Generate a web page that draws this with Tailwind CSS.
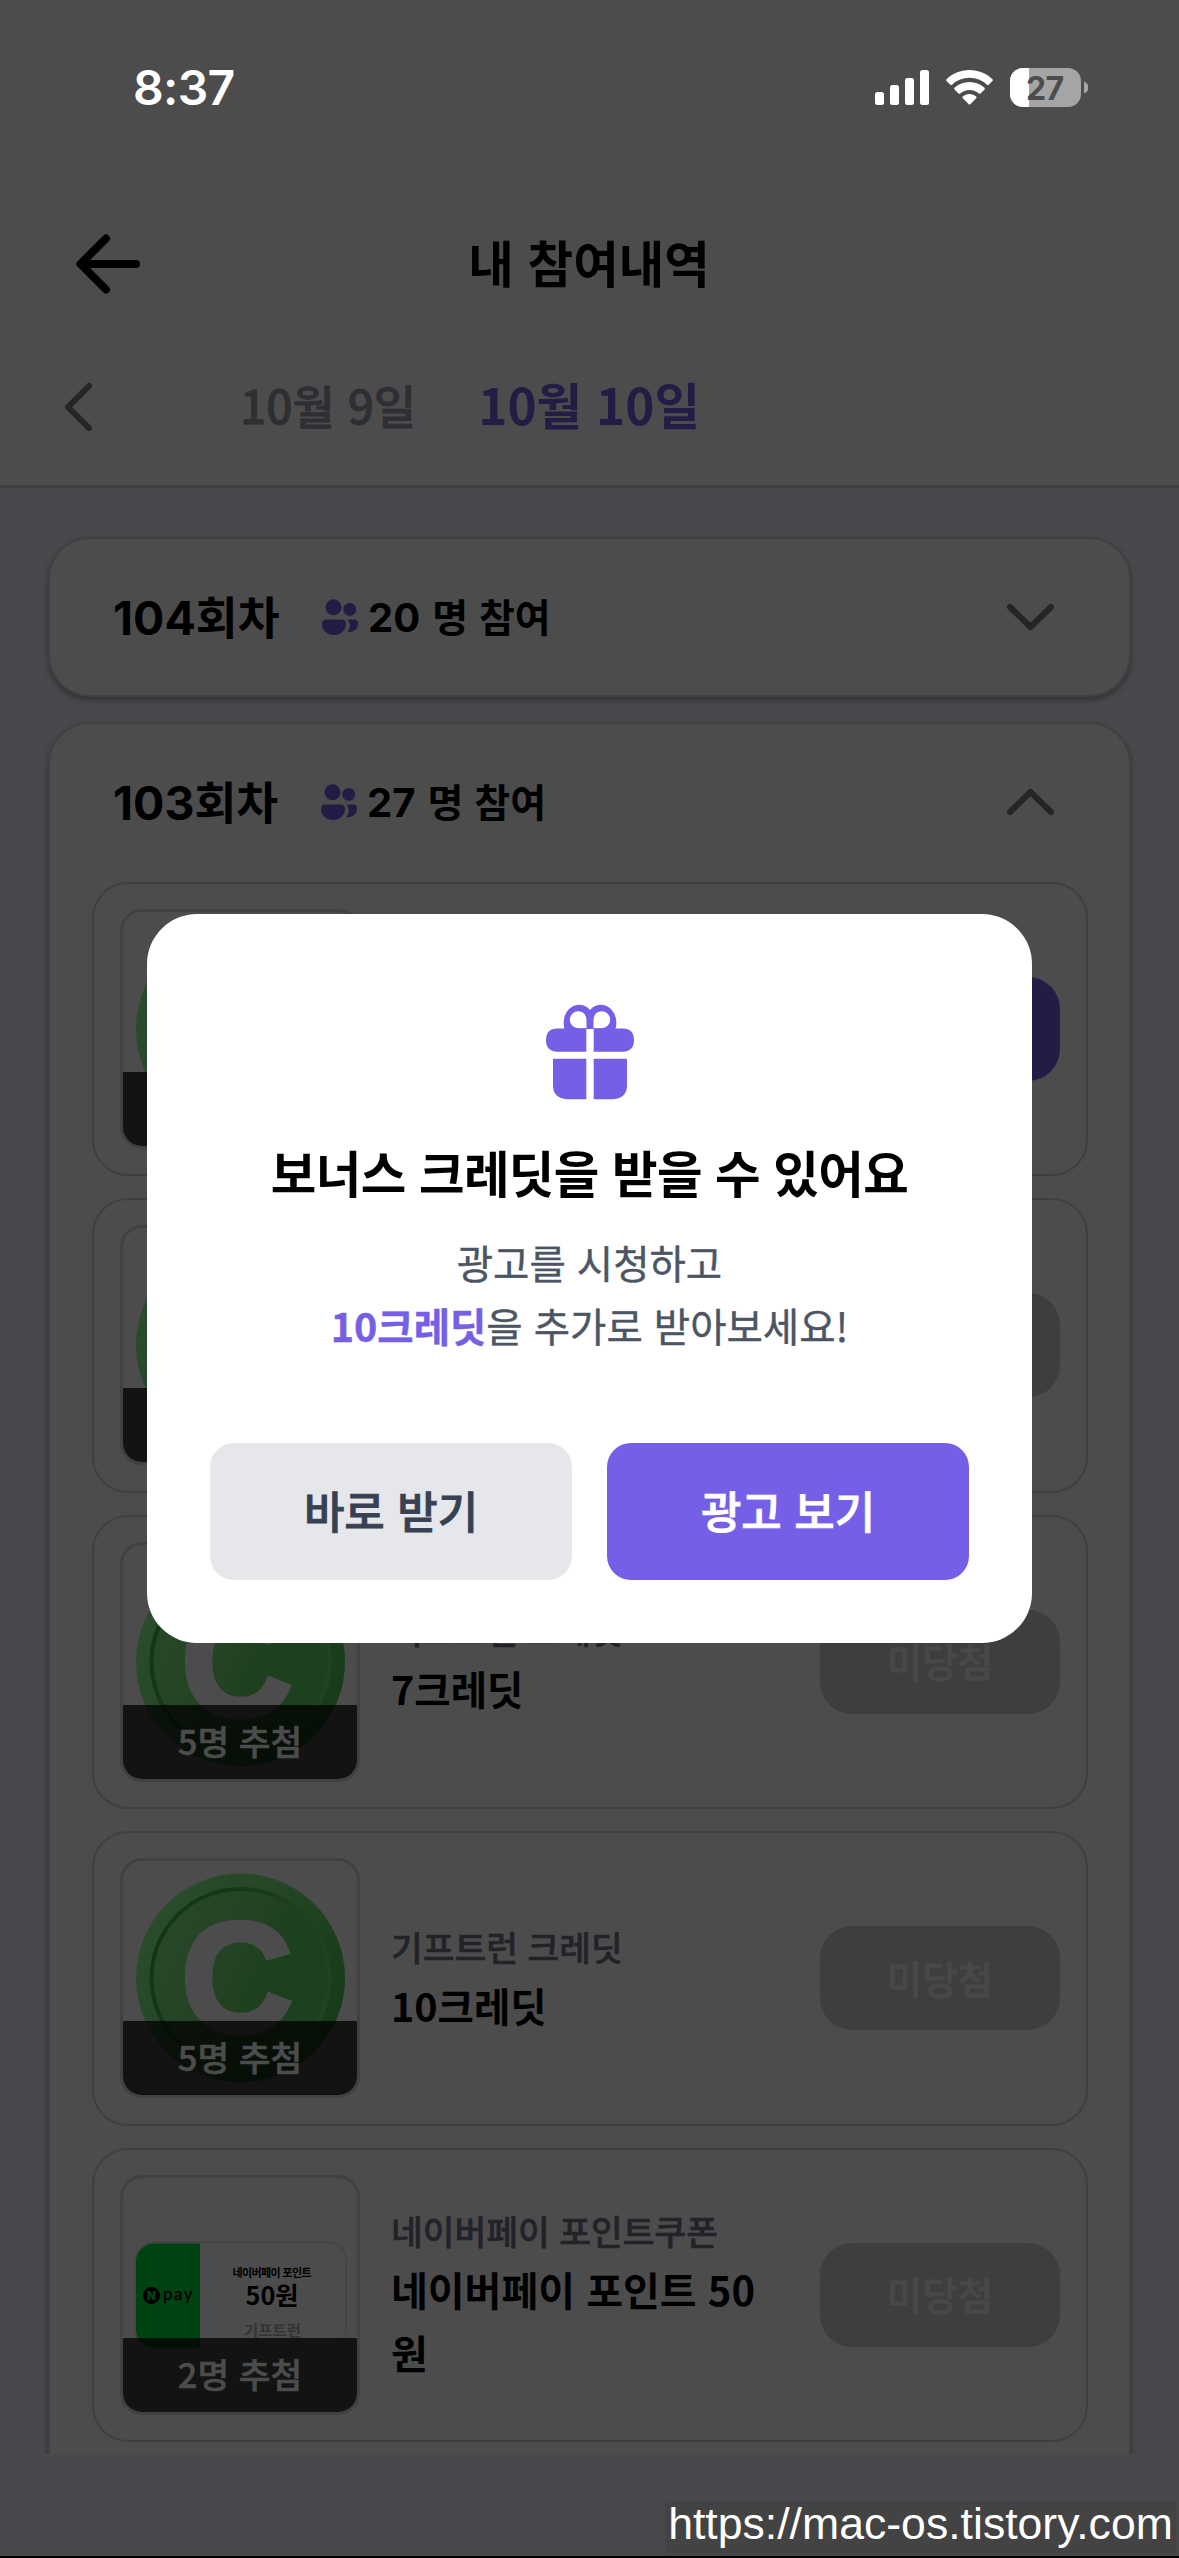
<!DOCTYPE html>
<html lang="ko">
<head>
<meta charset="utf-8">
<title>내 참여내역</title>
<script src="https://cdn.jsdelivr.net/npm/@tailwindcss/browser@4"></script>
</head>
<body class="relative h-[2558px] w-[1179px] overflow-hidden bg-[#49484c] font-['Noto_Sans_CJK_KR',sans-serif] text-black">

<!-- shared symbols -->
<svg class="absolute h-0 w-0">
  <defs>
    <linearGradient id="rim" x1="0" y1="0" x2="1" y2="0.6">
      <stop offset="0" stop-color="#2c4f2f"/><stop offset="0.5" stop-color="#264626"/><stop offset="1" stop-color="#163c19"/>
    </linearGradient>
    <linearGradient id="face" x1="0" y1="0.1" x2="1" y2="0.6">
      <stop offset="0" stop-color="#2a472a"/><stop offset="0.45" stop-color="#244324"/><stop offset="0.75" stop-color="#1c3f1d"/><stop offset="1" stop-color="#1d401e"/>
    </linearGradient>
    <linearGradient id="groove" x1="0" y1="0" x2="1" y2="0.5">
      <stop offset="0" stop-color="#103517"/><stop offset="0.45" stop-color="#153919"/><stop offset="0.7" stop-color="#1f401f"/><stop offset="1" stop-color="#224222"/>
    </linearGradient>
  </defs>
  <symbol id="coin" viewBox="0 0 234 234">
    <circle cx="117.5" cy="117" r="104.5" fill="url(#rim)"/>
    <circle cx="117.5" cy="117" r="89" fill="url(#face)" stroke="url(#groove)" stroke-width="4"/>
  </symbol>
  <symbol id="people" viewBox="0 0 36 36">
    <circle cx="11.5" cy="8.3" r="8"/>
    <circle cx="27.7" cy="10.4" r="6.4"/>
    <path d="M4 20.5h15.500q4.500 0 4.500 4.500c0 6-5 11-12 11s-12-5-12-10.500q0-5 4-5z"/>
    <path d="M25.300 20.500h6.700q4 0 4 4c0 6-4.500 9-11 8.800q3.500-4.500 2.700-8.300q-.5-2.800-2.400-4.500z"/>
  </symbol>
</svg>

<header class="flex flex-col border-b-3 border-[#3f3f3f] bg-[#4c4c4c]">
  <div class="flex h-[176px] items-center justify-between pr-[91px] pl-[133px]">
    <span class="font-[Inter] text-[48px] leading-none font-semibold tracking-[-0.7px] text-white">8:37</span>
    <svg class="h-[40px] w-[213px]" viewBox="875 68 213 40" fill="#fff">
      <rect x="875" y="92" width="9" height="13" rx="2.500"/>
      <rect x="890" y="85" width="9" height="20" rx="2.500"/>
      <rect x="905" y="78" width="9" height="27" rx="2.500"/>
      <rect x="920" y="70" width="9" height="35" rx="2.500"/>
      <path d="M969.500 70c9 0 17 3.500 23 9.200q.8.9 0 1.800l-3.800 3.700q-.9.800-1.800 0a25.500 25.500 0 0 0-34.800 0q-.9.800-1.800 0l-3.800-3.700q-.8-.9 0-1.800c6-5.700 14-9.200 23-9.200z"/>
      <path d="M969.500 82c5.800 0 11 2.200 15 5.800q.9.900 0 1.800l-4 3.900q-.8.700-1.700 0a14 14 0 0 0-18.600 0q-.9.700-1.700 0l-4-3.900q-.9-.9 0-1.800c4-3.600 9.200-5.800 15-5.800z"/>
      <path d="M969.500 94c2.600 0 4.900.9 6.700 2.400q.9.900 0 1.800l-5.700 5.900q-1 1-2 0l-5.700-5.900q-.9-.9 0-1.800c1.800-1.500 4.100-2.400 6.700-2.400z"/>
      <rect x="1010" y="68" width="71" height="39" rx="13" fill="#a5a5a5"/>
      <path d="M1029 68h-6a13 13 0 0 0-13 13v13a13 13 0 0 0 13 13h6z"/>
      <path d="M1084 81.500q4.500 2 4.500 6t-4.500 6z" fill="#a5a5a5"/>
      <text x="1045" y="99.500" text-anchor="middle" font-family="Inter" font-weight="700" font-size="32" textLength="38" fill="#4c4c4c">27</text>
    </svg>
  </div>
  <div class="grid h-[176px] grid-cols-[1fr_auto_1fr] items-center pr-[76px] pl-[75px]">
    <svg class="h-[62px] w-[66px]" viewBox="0 0 66 62" fill="none" stroke="#000" stroke-width="8" stroke-linecap="round" stroke-linejoin="round"><path d="M31 5.500 5.500 31 31 56.500M7 31h54"/></svg>
    <h1 class="pb-[5px] text-[49.500px] leading-[60px] font-bold">내 참여내역</h1>
  </div>
  <div class="flex h-[133px] items-center pb-6 pl-[63px]">
    <svg class="h-[50px] w-[30px]" viewBox="0 0 30 50" fill="none" stroke="#252525" stroke-width="6" stroke-linecap="round" stroke-linejoin="round"><path d="M26 4 5 25l21 21"/></svg>
    <span class="ml-[147px] pb-[6px] text-[46px] leading-[60px] font-medium text-[#2e2f33] [-webkit-text-stroke:0.8px]">10월 9일</span>
    <span class="ml-[62px] pb-[6px] text-[49.500px] leading-[60px] font-bold text-[#241c45]">10월 10일</span>
  </div>
</header>

<main class="flex h-[1965.500px] flex-col gap-[25px] overflow-hidden px-[48px] pt-[48.500px]">
  <section class="flex h-[160px] shrink-0 items-center rounded-[42px] border-2 border-[#414142] bg-[#4c4c4c] pr-[74px] pl-[63px] shadow-[0_3px_6px_rgba(0,0,0,0.35)]">
    <h2 class="flex w-[209px] items-baseline text-[45.500px] leading-[60px] font-bold"><span class="font-[Inter] text-[46.500px]">104</span>회차</h2>
    <svg class="h-[36px] w-[36px]" fill="#241c45"><use href="#people"/></svg>
    <p class="ml-[10px] flex items-baseline gap-3 text-[39px] leading-[60px] font-semibold"><span class="font-[Inter] text-[40px] font-bold">20</span>명 참여</p>
    <svg class="ml-auto h-[28px] w-[49px]" viewBox="0 0 49 28" fill="none" stroke="#252525" stroke-width="6" stroke-linecap="round" stroke-linejoin="round"><path d="M4 4l20.500 20L45 4"/></svg>
  </section>

  <section class="flex h-[1900px] shrink-0 flex-col rounded-[42px] border-2 border-[#414142] bg-[#4c4c4c] pr-[41px] pl-[42px] shadow-[0_3px_6px_rgba(0,0,0,0.35)]">
    <div class="flex h-[158px] shrink-0 items-center pr-[33px] pb-0.5 pl-[21px]">
      <h2 class="flex w-[208px] items-baseline text-[45.500px] leading-[60px] font-bold"><span class="font-[Inter] text-[46.500px]">103</span>회차</h2>
      <svg class="h-[36px] w-[36px]" fill="#241c45"><use href="#people"/></svg>
      <p class="ml-[10px] flex items-baseline gap-3 text-[39px] leading-[60px] font-semibold"><span class="font-[Inter] text-[40px] font-bold">27</span>명 참여</p>
      <svg class="ml-auto h-[28px] w-[49px]" viewBox="0 0 49 28" fill="none" stroke="#252525" stroke-width="6" stroke-linecap="round" stroke-linejoin="round"><path d="M4 24 24.500 4 45 24"/></svg>
    </div>

    <div class="flex flex-col gap-[22px]">
      <article class="flex h-[294.500px] items-center rounded-[36px] border-2 border-[#404040] px-[26px]">
        <div class="relative h-[240px] w-[240px] overflow-hidden rounded-[22px] border-3 border-[#404144]">
          <svg class="h-[234px] w-[234px]"><use href="#coin"/></svg>
          <div class="absolute inset-x-0 bottom-0 h-[74px] bg-[#131313]"></div>
        </div>
        <div class="ml-auto h-[104px] w-[240px] rounded-[32px] bg-[#241c45]"></div>
      </article>

      <article class="flex h-[294.500px] items-center rounded-[36px] border-2 border-[#404040] px-[26px]">
        <div class="relative h-[240px] w-[240px] overflow-hidden rounded-[22px] border-3 border-[#404144]">
          <svg class="h-[234px] w-[234px]"><use href="#coin"/></svg>
          <div class="absolute inset-x-0 bottom-0 h-[74px] bg-[#131313]"></div>
        </div>
        <div class="ml-auto h-[104px] w-[240px] rounded-[32px] bg-[#3e3e3e]"></div>
      </article>

      <article class="flex h-[294.500px] items-center rounded-[36px] border-2 border-[#404040] px-[26px]">
        <div class="relative h-[240px] w-[240px] overflow-hidden rounded-[22px] border-3 border-[#404144]">
          <svg class="h-[234px] w-[234px]" viewBox="0 0 234 234"><use href="#coin"/><text x="58" y="170" font-family="Liberation Sans" font-weight="700" font-size="155" fill="#4c4c4c" stroke="#4c4c4c" stroke-width="5">C</text></svg>
          <div class="absolute inset-x-0 bottom-0 flex h-[74px] items-center justify-center bg-black/75 pb-1 text-[34.500px] leading-none font-medium text-[#4c4c4c] [-webkit-text-stroke:0.6px]">5명 추첨</div>
        </div>
        <div class="ml-[31px] flex w-[400px] flex-col pb-0.5">
          <p class="text-[34.500px] leading-[54px] font-medium text-[#222228] [-webkit-text-stroke:0.5px]">기프트런 크레딧</p>
          <p class="text-[39.500px] leading-[63px] font-bold">7크레딧</p>
        </div>
        <div class="ml-auto flex h-[104px] w-[240px] items-center justify-center rounded-[32px] bg-[#3e3e3e] pb-[3px] text-[38.500px] leading-none font-medium text-[#484848] [-webkit-text-stroke:0.8px]">미당첨</div>
      </article>

      <article class="flex h-[294.500px] items-center rounded-[36px] border-2 border-[#404040] px-[26px]">
        <div class="relative h-[240px] w-[240px] overflow-hidden rounded-[22px] border-3 border-[#404144]">
          <svg class="h-[234px] w-[234px]" viewBox="0 0 234 234"><use href="#coin"/><text x="58" y="170" font-family="Liberation Sans" font-weight="700" font-size="155" fill="#4c4c4c" stroke="#4c4c4c" stroke-width="5">C</text></svg>
          <div class="absolute inset-x-0 bottom-0 flex h-[74px] items-center justify-center bg-black/75 pb-1 text-[34.500px] leading-none font-medium text-[#4c4c4c] [-webkit-text-stroke:0.6px]">5명 추첨</div>
        </div>
        <div class="ml-[31px] flex w-[400px] flex-col pb-0.5">
          <p class="text-[34.500px] leading-[54px] font-medium text-[#222228] [-webkit-text-stroke:0.5px]">기프트런 크레딧</p>
          <p class="text-[39.500px] leading-[63px] font-bold">10크레딧</p>
        </div>
        <div class="ml-auto flex h-[104px] w-[240px] items-center justify-center rounded-[32px] bg-[#3e3e3e] pb-[3px] text-[38.500px] leading-none font-medium text-[#484848] [-webkit-text-stroke:0.8px]">미당첨</div>
      </article>

      <article class="flex h-[294.500px] items-center rounded-[36px] border-2 border-[#404040] px-[26px]">
        <div class="relative h-[240px] w-[240px] overflow-hidden rounded-[22px] border-3 border-[#404144]">
          <svg class="h-[234px] w-[234px]" viewBox="0 0 234 234" font-family="Noto Sans CJK KR">
            <rect x="12.500" y="64" width="210.500" height="106" rx="18" fill="none" stroke="#464646" stroke-width="2"/>
            <path d="M77 65.500H31a18 18 0 0 0-18 18v68a18 18 0 0 0 18 18h46z" fill="#004312"/>
            <circle cx="28.500" cy="117.500" r="8.500"/>
            <text x="28.500" y="121.700" text-anchor="middle" font-family="Inter" font-weight="900" font-size="11.500" fill="#004312">N</text>
            <text x="40" y="122" font-family="Lato" font-weight="400" font-size="17" stroke="#000" stroke-width="0.400" textLength="29.500">pay</text>
            <text x="149" y="98.500" text-anchor="middle" font-weight="700" font-size="11" textLength="79">네이버페이 포인트</text>
            <text x="149" y="126.500" text-anchor="middle" font-weight="700" font-size="25" textLength="53" lengthAdjust="spacingAndGlyphs">50원</text>
            <text x="149.500" y="158" text-anchor="middle" font-weight="700" font-size="15" textLength="57" lengthAdjust="spacingAndGlyphs" fill="#333">기프트런</text>
          </svg>
          <div class="absolute inset-x-0 bottom-0 flex h-[74px] items-center justify-center bg-black/75 pb-1 text-[34.500px] leading-none font-medium text-[#4c4c4c] [-webkit-text-stroke:0.6px]">2명 추첨</div>
        </div>
        <div class="ml-[31px] flex w-[400px] flex-col pb-0.5">
          <p class="mb-0.5 text-[34.500px] leading-[52px] font-medium text-[#222228] [-webkit-text-stroke:0.5px]">네이버페이 포인트쿠폰</p>
          <p class="text-[40px] leading-[63px] font-bold">네이버페이 포인트 50<br>원</p>
        </div>
        <div class="ml-auto flex h-[104px] w-[240px] items-center justify-center rounded-[32px] bg-[#3e3e3e] pb-[3px] text-[38.500px] leading-none font-medium text-[#484848] [-webkit-text-stroke:0.8px]">미당첨</div>
      </article>
    </div>
  </section>
</main>

<!-- bonus dialog -->
<div role="dialog" class="absolute top-[914px] left-[147px] flex h-[729px] w-[885px] flex-col items-center rounded-[50px] bg-white p-[63px]">
  <svg class="mt-[27px] h-[96px] w-[90px] shrink-0" viewBox="544 1004 90 96" fill="#755fe6">
    <path fill-rule="evenodd" d="M563.500 1029C560 1016 568 1004.700 578 1004.700c4.500 0 8.500 2 11 5.300c2.500-3.300 6.500-5.300 11-5.300c10 0 18 11.300 14.500 24.300zM585.500 1028.300v-8.300c0-5-3.700-8.700-8.200-8.700a8.500 8.500 0 0 0 0 17zM592.500 1028.300h8.200a8.500 8.500 0 0 0 0-17c-4.500 0-8.200 3.700-8.200 8.700z"/>
    <path d="M585.300 1028.500v23.300H556q-11-.5-11-11.700t11-11.600zM592.700 1028.500v23.300H622q11-.5 11-11.700t-11-11.600z"/>
    <path d="M585.300 1058.800v40.500H566q-14-1-14-14v-25.500q0-1 1-1zM592.700 1058.800v40.500H612q14-1 14-14v-25.500q0-1-1-1z"/>
  </svg>
  <h3 class="mt-[39px] text-[49.500px] leading-[66px] font-bold tracking-[-0.6px] whitespace-nowrap">보너스 크레딧을 받을 수 있어요</h3>
  <p class="mt-[25px] text-center text-[39.500px] leading-[63px] whitespace-nowrap text-[#4b5563] [-webkit-text-stroke:0.4px]">광고를 시청하고<br><b class="font-bold text-[#755fe6]">10크레딧</b>을 추가로 받아보세요!</p>
  <div class="mt-auto grid w-full shrink-0 grid-cols-2 gap-[35px]">
    <button class="h-[137px] rounded-[24px] bg-[#e5e7eb] pb-1 text-[44px] leading-none font-medium text-[#374151] [-webkit-text-stroke:0.8px]">바로 받기</button>
    <button class="h-[137px] rounded-[24px] bg-[#755fe6] pb-1 text-[44px] leading-none font-medium text-white [-webkit-text-stroke:0.8px]">광고 보기</button>
  </div>
</div>

<!-- blog address and bottom edge -->
<div class="absolute top-[2501px] left-[665px] flex h-[52px] w-[511px] items-center justify-center bg-[#434343] pb-[6px] font-['Liberation_Sans',sans-serif] text-[44.600px] leading-none whitespace-nowrap text-white">https://mac-os.tistory.com</div>
<div class="absolute inset-x-0 bottom-0 h-[2px] bg-black"></div>
</body>
</html>
